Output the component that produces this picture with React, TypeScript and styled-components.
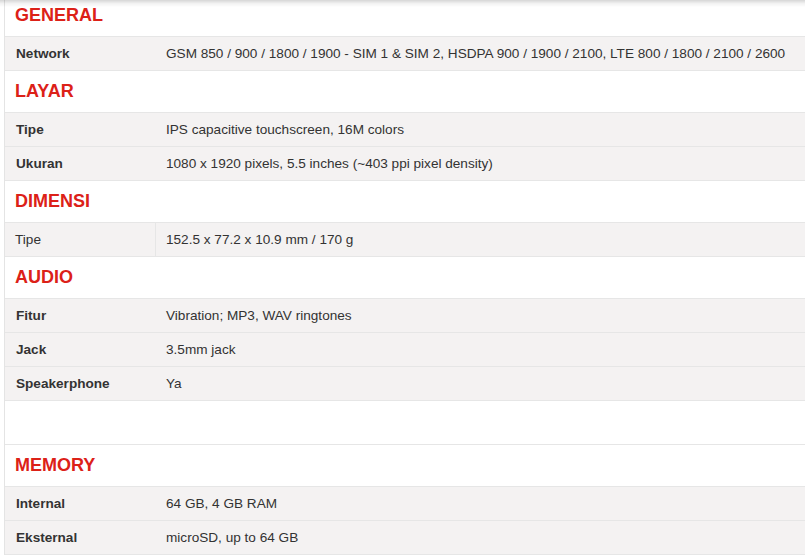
import React from "react";
import styled, { createGlobalStyle } from "styled-components";

const GlobalStyle = createGlobalStyle`
  body {
    margin: 0;
    background: #fff;
    font-family: "Liberation Sans", Arial, sans-serif;
    color: #333;
    overflow: hidden;
  }
`;

const TopShadow = styled.div`
  position: fixed;
  top: 0;
  left: 0;
  right: 0;
  height: 7px;
  background: linear-gradient(
    180deg,
    rgba(0, 0, 0, 0.16) 0%,
    rgba(0, 0, 0, 0.05) 50%,
    rgba(0, 0, 0, 0) 100%
  );
  pointer-events: none;
`;

const SpecWrap = styled.div`
  margin: -5px 0 0 4px;
  border-left: 1px solid #e4e4e4;
`;

const GroupTitle = styled.h2`
  margin: 0;
  height: 41px;
  display: flex;
  align-items: center;
  padding-left: 10px;
  font-size: 18px;
  font-weight: bold;
  color: #dc2118;
  border-bottom: 1px solid #e6e6e6;
  background: #fff;
`;

const SpecRow = styled.div`
  display: flex;
  height: 33px;
  background: #f4f2f2;
  border-bottom: 1px solid #e6e6e6;
  font-size: 13.6px;
`;

const SpecLabel = styled.div<{ $plain?: boolean }>`
  box-sizing: border-box;
  width: 151px;
  flex-shrink: 0;
  display: flex;
  align-items: center;
  padding-left: ${(p) => (p.$plain ? "10px" : "11px")};
  font-weight: ${(p) => (p.$plain ? "normal" : "bold")};
  border-right: ${(p) => (p.$plain ? "1px solid #e6e6e6" : "none")};
`;

const SpecValue = styled.div`
  display: flex;
  align-items: center;
  padding-left: 10px;
  white-space: nowrap;
`;

const Spacer = styled.div`
  height: 43px;
  border-bottom: 1px solid #e6e6e6;
  background: #fff;
`;

type Spec = { label: string; value: string; plain?: boolean };

const groups: { title: string; specs: Spec[]; gapAfter?: boolean }[] = [
  {
    title: "GENERAL",
    specs: [
      {
        label: "Network",
        value:
          "GSM 850 / 900 / 1800 / 1900 - SIM 1 & SIM 2, HSDPA 900 / 1900 / 2100, LTE 800 / 1800 / 2100 / 2600",
      },
    ],
  },
  {
    title: "LAYAR",
    specs: [
      { label: "Tipe", value: "IPS capacitive touchscreen, 16M colors" },
      { label: "Ukuran", value: "1080 x 1920 pixels, 5.5 inches (~403 ppi pixel density)" },
    ],
  },
  {
    title: "DIMENSI",
    specs: [{ label: "Tipe", value: "152.5 x 77.2 x 10.9 mm / 170 g", plain: true }],
  },
  {
    title: "AUDIO",
    specs: [
      { label: "Fitur", value: "Vibration; MP3, WAV ringtones" },
      { label: "Jack", value: "3.5mm jack" },
      { label: "Speakerphone", value: "Ya" },
    ],
    gapAfter: true,
  },
  {
    title: "MEMORY",
    specs: [
      { label: "Internal", value: "64 GB, 4 GB RAM" },
      { label: "Eksternal", value: "microSD, up to 64 GB" },
    ],
  },
];

const App = () => {
  return (
    <>
      <GlobalStyle />
      <SpecWrap>
        {groups.map((g) => (
          <React.Fragment key={g.title}>
            <GroupTitle>{g.title}</GroupTitle>
            {g.specs.map((s) => (
              <SpecRow key={g.title + s.label}>
                <SpecLabel $plain={s.plain}>{s.label}</SpecLabel>
                <SpecValue>{s.value}</SpecValue>
              </SpecRow>
            ))}
            {g.gapAfter && <Spacer />}
          </React.Fragment>
        ))}
      </SpecWrap>
      <TopShadow />
    </>
  );
};

export default App;
